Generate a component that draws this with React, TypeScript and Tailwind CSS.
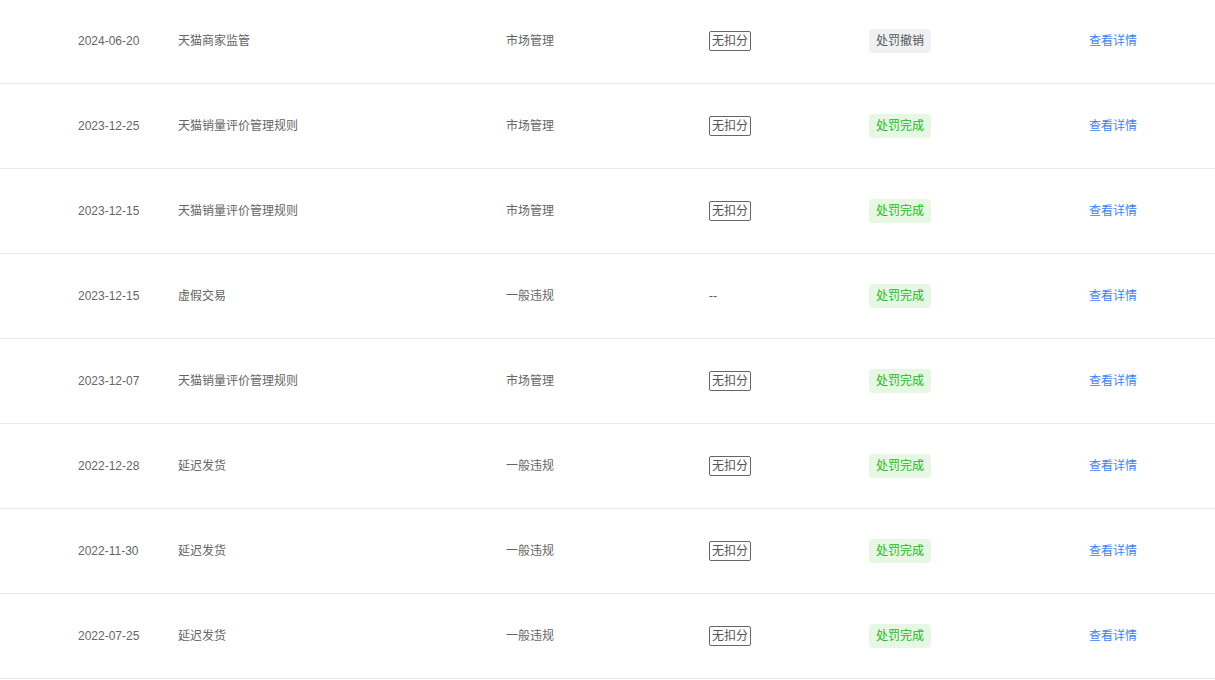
const rows = [
  { date: '2024-06-20', title: '天猫商家监管', type: '市场管理', score: true, status: 'revoked' },
  { date: '2023-12-25', title: '天猫销量评价管理规则', type: '市场管理', score: true, status: 'done' },
  { date: '2023-12-15', title: '天猫销量评价管理规则', type: '市场管理', score: true, status: 'done' },
  { date: '2023-12-15', title: '虚假交易', type: '一般违规', score: false, status: 'done' },
  { date: '2023-12-07', title: '天猫销量评价管理规则', type: '市场管理', score: true, status: 'done' },
  { date: '2022-12-28', title: '延迟发货', type: '一般违规', score: true, status: 'done' },
  { date: '2022-11-30', title: '延迟发货', type: '一般违规', score: true, status: 'done' },
  { date: '2022-07-25', title: '延迟发货', type: '一般违规', score: true, status: 'done' },
];

export default function App() {
  return (
    <div
      className="w-[1215px] h-[680px] overflow-hidden bg-white text-[12px] text-[#666]"
      style={{ fontFamily: '"Liberation Sans", "Noto Sans CJK SC", sans-serif' }}
    >
      <div className="-mt-px">
        {rows.map((r, i) => (
          <div key={i} className="flex items-center h-[85px] border-b border-[#e8e8e8]">
            <div className="w-[178px] pl-[78px]">{r.date}</div>
            <div className="w-[328px]">{r.title}</div>
            <div className="w-[203px]">{r.type}</div>
            <div className="w-[160px]">
              {r.score ? (
                <span className="inline-block border border-[#666] rounded-[2px] px-[2px] leading-[18px] text-[12px] text-[#555]">
                  无扣分
                </span>
              ) : (
                <span className="text-[#555]">--</span>
              )}
            </div>
            <div className="w-[220px]">
              {r.status === 'done' ? (
                <span className="inline-flex items-center justify-center w-[62px] h-[24px] rounded-[4px] bg-[#e6f8e3] text-[#21b821]">
                  处罚完成
                </span>
              ) : (
                <span className="inline-flex items-center justify-center w-[62px] h-[24px] rounded-[4px] bg-[#f0f1f5] text-[#555]">
                  处罚撤销
                </span>
              )}
            </div>
            <div className="text-[#3d7fff] cursor-pointer">查看详情</div>
          </div>
        ))}
      </div>
    </div>
  );
}
